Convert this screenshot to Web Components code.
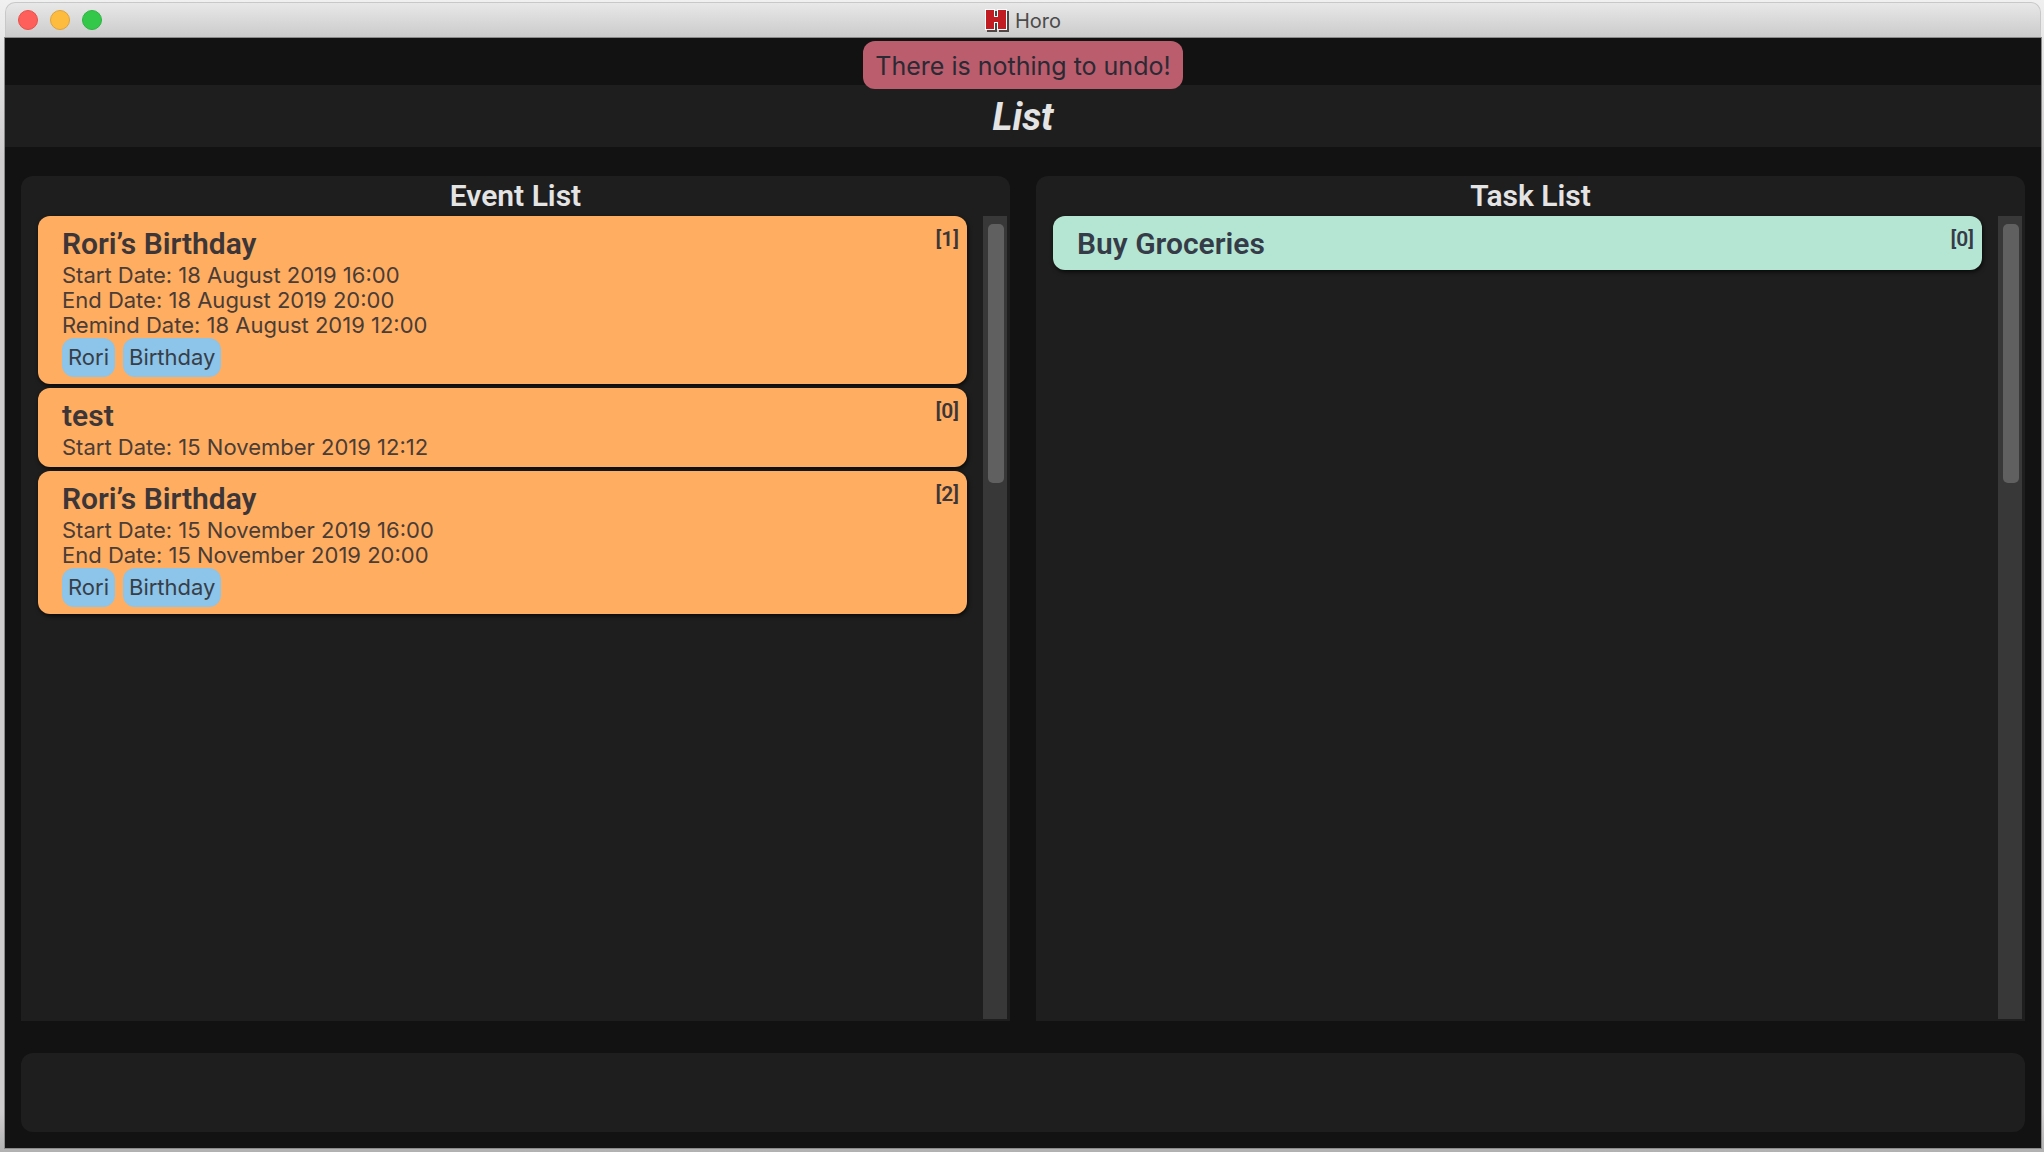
<!DOCTYPE html>
<html lang="en">
<head>
<meta charset="utf-8">
<title>Horo</title>
<style>
  html, body { height: 100%; margin: 0; }
  body {
    box-sizing: border-box;
    padding: 2px 3px 4px 5px;
    display: flex;
    background: linear-gradient(#f0f0f0, #cfcdcd 160px, #cfcdcd calc(100% - 40px), #b2b1b1);
    font-family: Roboto, "Liberation Sans", sans-serif;
    overflow: hidden;
  }
</style>
</head>
<body>
<horo-window>
  <horo-titlebar slot="titlebar">Horo</horo-titlebar>
  <horo-toast slot="toast">There is nothing to undo!</horo-toast>
  <horo-heading slot="heading">List</horo-heading>
  <horo-panel heading="Event List">
    <horo-card index="1" heading="Rori’s Birthday">
      <horo-date>Start Date: 18 August 2019 16:00</horo-date>
      <horo-date>End Date: 18 August 2019 20:00</horo-date>
      <horo-date>Remind Date: 18 August 2019 12:00</horo-date>
      <horo-tag slot="tags">Rori</horo-tag>
      <horo-tag slot="tags">Birthday</horo-tag>
    </horo-card>
    <horo-card index="0" heading="test">
      <horo-date>Start Date: 15 November 2019 12:12</horo-date>
    </horo-card>
    <horo-card index="2" heading="Rori’s Birthday">
      <horo-date>Start Date: 15 November 2019 16:00</horo-date>
      <horo-date>End Date: 15 November 2019 20:00</horo-date>
      <horo-tag slot="tags">Rori</horo-tag>
      <horo-tag slot="tags">Birthday</horo-tag>
    </horo-card>
  </horo-panel>
  <horo-panel heading="Task List">
    <horo-card kind="task" index="0" heading="Buy Groceries"></horo-card>
  </horo-panel>
  <horo-command slot="command"></horo-command>
</horo-window>

<script>
const define = (name, html, setup) => {
  const template = document.createElement('template');
  template.innerHTML = html;
  customElements.define(name, class extends HTMLElement {
    connectedCallback() {
      if (this.shadowRoot) return;
      const root = this.attachShadow({ mode: 'open' });
      root.append(template.content.cloneNode(true));
      if (setup) setup(this, root);
    }
  });
};

define('horo-window', `
  <style>
    :host { flex: 1; min-width: 0; display: flex; flex-direction: column; }
    .client { flex: 1; min-height: 0; display: flex; flex-direction: column; position: relative; padding-top: 47px; background: #121212; box-shadow: 0 0 0 1px #8a8a8a; }
    main { flex: 1; min-height: 0; display: flex; flex-direction: column; gap: 32px; padding: 29px 16px 16px; }
    .panels { flex: 1; min-height: 0; display: grid; grid-template-columns: 1fr 1fr; gap: 26px; }
    .toast { position: absolute; top: 3px; left: 0; right: 0; display: flex; justify-content: center; }
  </style>
  <slot name="titlebar"></slot>
  <div class="client">
    <slot name="heading"></slot>
    <main>
      <div class="panels"><slot></slot></div>
      <slot name="command"></slot>
    </main>
    <div class="toast"><slot name="toast"></slot></div>
  </div>`);

define('horo-titlebar', `
  <style>
    :host { box-sizing: border-box; height: 36px; display: grid; grid-template-columns: 1fr auto 1fr; align-items: center; padding: 0 12px; border: 1px solid #c8c8c8; border-bottom-color: #5f5f5f; border-radius: 10px 10px 0 0; background: linear-gradient(#e8e8e8, #cbcbcb); }
    .lights { display: flex; gap: 12px; }
    button { box-sizing: border-box; width: 20px; height: 20px; padding: 0; border: 1px solid #e8504b; border-radius: 50%; background: #fe5f5a; }
    .min { border-color: #dfa337; background: #febc3e; }
    .max { border-color: #2bb541; background: #34c84a; }
    .name { display: flex; align-items: center; gap: 6px; padding-top: 2px; font: 20px/24px Inter, Roboto, sans-serif; color: #4b4b4b; }
    svg { display: block; width: 24px; height: 24px; }
  </style>
  <div class="lights">
    <button class="close" aria-label="Close"></button>
    <button class="min" aria-label="Minimize"></button>
    <button class="max" aria-label="Zoom"></button>
  </div>
  <div class="name">
    <svg viewBox="0 0 24 24" aria-hidden="true">
      <path fill="#4f4646" d="M2 2H12V9H14V2H24V23H14V16H12V23H2Z"/>
      <path fill="#fff" d="M0 0H10V7H12V0H22V21H12V14H10V21H0Z"/>
      <path fill="#c01c22" d="M1 1H9V8H13V1H21V20H13V13H9V20H1Z"/>
    </svg>
    <slot></slot>
  </div>`);

define('horo-toast', `
  <style>
    :host { display: block; padding: 2px 12px 0; border-radius: 12px; background: #bb5d6c; color: #2a2a35; font: 25px/46px Inter, Roboto, sans-serif; white-space: nowrap; }
  </style>
  <div role="status"><slot></slot></div>`);

define('horo-heading', `
  <style>
    :host { display: block; background: #1e1e1e; color: #e4e4e4; }
    h1 { margin: 0; padding-top: 2px; font: italic 700 38px/60px Roboto, sans-serif; text-align: center; }
  </style>
  <h1><slot></slot></h1>`);

define('horo-panel', `
  <style>
    :host { min-width: 0; min-height: 0; display: flex; flex-direction: column; background: #1e1e1e; border-radius: 12px 12px 0 0; }
    h2 { margin: 0; font: 600 30px/40px Roboto, sans-serif; color: #e4e4e4; text-align: center; }
    .body { flex: 1; min-height: 0; display: flex; gap: 16px; padding: 0 3px 2px 17px; }
    .list { flex: 1; min-width: 0; display: flex; flex-direction: column; gap: 4px; }
    .track { box-sizing: border-box; width: 24px; padding: 8px 3px 0 5px; background: #383838; }
    .thumb { height: 259px; border-radius: 5px; background: #606060; }
  </style>
  <h2></h2>
  <div class="body">
    <div class="list"><slot></slot></div>
    <div class="track"><div class="thumb"></div></div>
  </div>`,
  (host, root) => { root.querySelector('h2').textContent = host.getAttribute('heading'); });

define('horo-card', `
  <style>
    :host { display: flex; justify-content: space-between; padding: 8px 8px 7px 24px; border-radius: 12px; background: #ffad60; color: #3c3638; box-shadow: 1px 2px 4px #000000b0; }
    :host([kind="task"]) { background: #b5e6d4; color: #353c48; }
    h3 { margin: 0; font: 600 30px/39px Roboto, sans-serif; }
    .index { font: 600 21px/30px Roboto, sans-serif; }
    .tags { display: flex; gap: 8px; }
  </style>
  <div>
    <h3></h3>
    <slot></slot>
    <div class="tags"><slot name="tags"></slot></div>
  </div>
  <div class="index"></div>`,
  (host, root) => {
    root.querySelector('h3').textContent = host.getAttribute('heading');
    root.querySelector('.index').textContent = '[' + host.getAttribute('index') + ']';
  });

define('horo-date', `
  <style>
    :host { display: block; font: 22px/25px Inter, Roboto, sans-serif; color: #4a3c36; }
  </style>
  <slot></slot>`);

define('horo-tag', `
  <style>
    :host { display: block; padding: 0 6px; border-radius: 12px; background: #8cc4ea; color: #373e48; font: 22px/39px Inter, Roboto, sans-serif; }
  </style>
  <slot></slot>`);

define('horo-command', `
  <style>
    :host { display: flex; }
    input { box-sizing: border-box; flex: 1; min-width: 0; height: 79px; padding: 0 16px; border: 0; border-radius: 12px; outline: 0; background: #1e1e1e; color: #e4e4e4; font: 25px Inter, Roboto, sans-serif; }
  </style>
  <input type="text" aria-label="Command">`);
</script>
</body>
</html>
